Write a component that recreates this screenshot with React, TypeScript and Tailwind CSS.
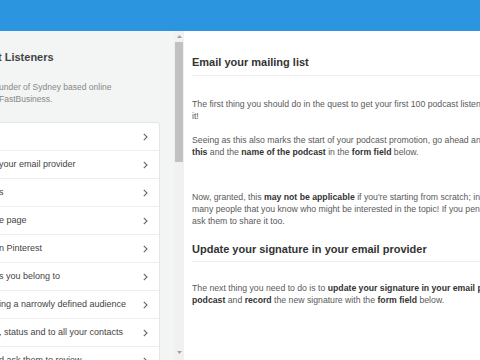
import React from "react";

const STEPS = [
  "",
  "your email provider",
  "s",
  "e page",
  "n Pinterest",
  "s you belong to",
  "ing a narrowly defined audience",
  ", status and to all your contacts",
  "d ask them to review",
];

function Chevron() {
  return (
    <svg width="5" height="8" viewBox="0 0 5 8" className="shrink-0">
      <polyline points="0.8,0.8 4,4 0.8,7.2" fill="none" stroke="#666" strokeWidth="1.1" />
    </svg>
  );
}

function Scrollbar() {
  return (
    <div className="w-[10px] bg-[#f1f1f1] flex flex-col items-center shrink-0">
      <div className="h-[11px] flex items-center justify-center">
        <svg width="5" height="3" viewBox="0 0 5 3">
          <polygon points="0,3 2.5,0 5,3" fill="#a3a3a3" />
        </svg>
      </div>
      <div className="w-[8px] h-[120px] bg-[#c1c1c1]" />
      <div className="flex-1" />
      <div className="h-[11px] flex items-center justify-center mb-[2px]">
        <svg width="5" height="3" viewBox="0 0 5 3">
          <polygon points="0,0 5,0 2.5,3" fill="#a3a3a3" />
        </svg>
      </div>
    </div>
  );
}

export default function App() {
  return (
    <div className="w-[480px] h-[360px] overflow-hidden flex flex-col font-['Liberation_Sans',Arial,sans-serif]">
      <div className="h-[31px] shrink-0 bg-[#2b95df]" />
      <div className="flex flex-1 min-h-0">
        <aside className="w-[184px] shrink-0 flex bg-[#f3f4f4]">
          <div className="w-[174px] overflow-hidden pt-[19px]">
            <div className="text-[11px] leading-[14px] font-bold text-[#444] whitespace-nowrap -ml-[2px]">
              t Listeners
            </div>
            <div className="mt-[17px] text-[8.5px] leading-[12px] text-[#888] whitespace-nowrap -ml-[1px]">
              <div>under of Sydney based online</div>
              <div>FastBusiness.</div>
            </div>
            <div className="mt-[17px] w-[160px] bg-white border border-l-0 border-[#e6e6e6] rounded-tr-[3px]">
              {STEPS.map((s, i) => (
                <div
                  key={i}
                  className="h-[28px] flex items-center justify-between pr-[11px] border-b border-[#eeeeee] text-[9px] text-[#444] whitespace-nowrap"
                >
                  <span className="-ml-[1px]">{s}</span>
                  <Chevron />
                </div>
              ))}
            </div>
          </div>
          <Scrollbar />
        </aside>

        <main className="flex-1 bg-white overflow-hidden pl-[8px] pt-[24px]">
          <div className="w-[440px] text-[8.7px] leading-[12px] text-[#5a5a5a] whitespace-nowrap">
            <h2 className="text-[11px] leading-[14px] font-bold text-[#333] pb-[6px] border-b border-[#eeeeee]">
              Email your mailing list
            </h2>
            <p className="mt-[22px]">
              The first thing you should do in the quest to get your first 100 podcast listeners is to email your
              <br />
              it!
            </p>
            <p className="mt-[12px]">
              Seeing as this also marks the start of your podcast promotion, go ahead and <b className="text-[#333]">share</b>
              <br />
              <b className="text-[#333]">this</b> and the <b className="text-[#333]">name of the podcast</b> in the{" "}
              <b className="text-[#333]">form field</b> below.
            </p>
            <p className="mt-[33px]">
              Now, granted, this <b className="text-[#333]">may not be applicable</b> if you're starting from scratch; in
              which case
              <br />
              many people that you know who might be interested in the topic! If you pen a quick note,
              <br />
              ask them to share it too.
            </p>
            <h2 className="mt-[15px] text-[11px] leading-[14px] font-bold text-[#333] pb-[5px] border-b border-[#eeeeee]">
              Update your signature in your email provider
            </h2>
            <p className="mt-[20px]">
              The next thing you need to do is to{" "}
              <b className="text-[#333]">update your signature in your email provider</b> to include your
              <br />
              <b className="text-[#333]">podcast</b> and <b className="text-[#333]">record</b> the new signature with the{" "}
              <b className="text-[#333]">form field</b> below.
            </p>
          </div>
        </main>
      </div>
    </div>
  );
}
